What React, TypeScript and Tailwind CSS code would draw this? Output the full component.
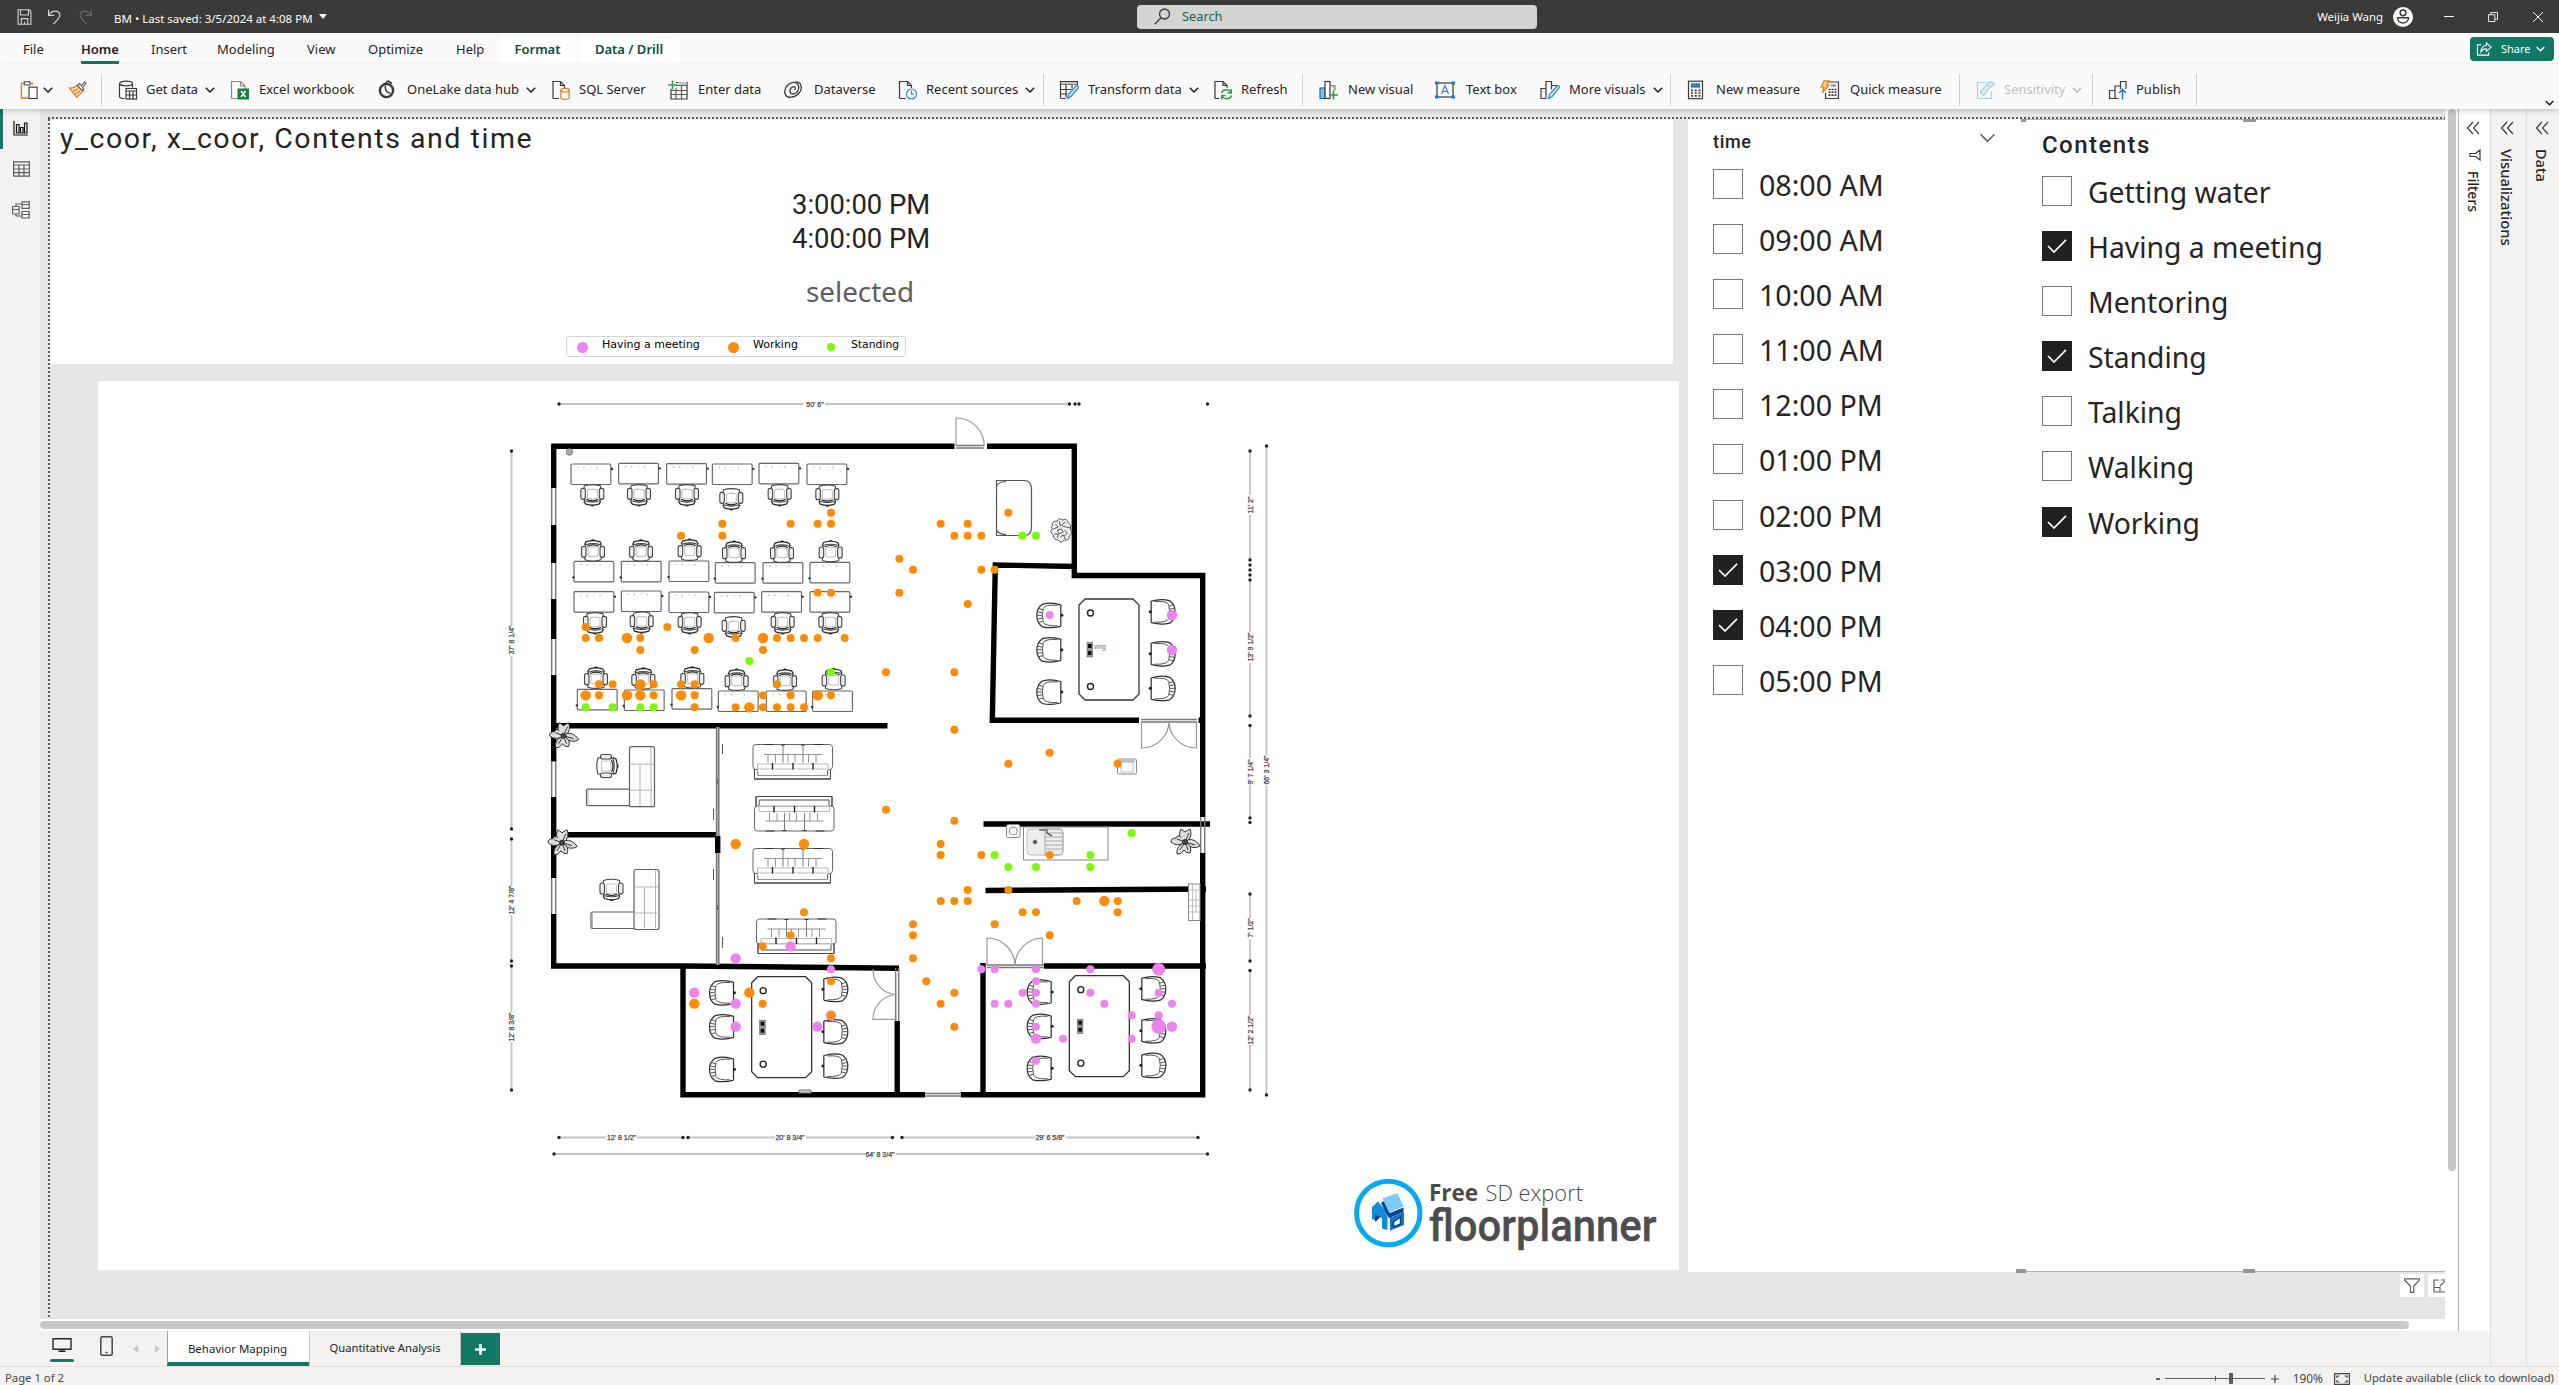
import React from "react";

type Pt = [number, number];

/* ---------- small icons ---------- */

const Svg = ({ children, className = "", box = "0 0 20 20" }: { children: React.ReactNode; className?: string; box?: string }) => (
  <svg viewBox={box} className={"shrink-0 " + className} fill="none" stroke="#3b3a39" strokeWidth="1.2">
    {children}
  </svg>
);

const Chevron = ({ className = "w-[10px] h-[6px]", color = "#252423", weight = 1.5 }: { className?: string; color?: string; weight?: number }) => (
  <svg viewBox="0 0 10 6" className={"shrink-0 " + className} fill="none" stroke={color} strokeWidth={weight}>
    <path d="M.8.7 5 5 9.2.7" />
  </svg>
);

const Collapse = () => (
  <svg viewBox="0 0 14 14" className="h-[14px] w-[14px]" fill="none" stroke="#3b3a39" strokeWidth="1.2">
    <path d="M7 1 1.5 7 7 13M13 1 7.500 7 13 13" />
  </svg>
);

const icons: Record<string, React.ReactNode> = {
  paste: <><path d="M13 4.500V3H1.500v15.500H9" stroke="#e07b16" strokeWidth="1.500" /><rect x="4.500" y="1.200" width="6" height="3.500" fill="#fafafa" stroke="#605e5c" /><rect x="9.500" y="7" width="8.500" height="12" fill="#fff" /></>,
  brush: <><path d="M1.500 8.500 9 18l8-7-3.500-4.500L11.500 8 9.500 5.500C7 8 4.500 8.700 1.500 8.500Z" fill="#fbd9b0" stroke="#e07b16" /><path d="M5 11.500c2 0 4-1 5.500-2.500M7 15c2-.5 4-1.500 5.500-3.500" stroke="#e07b16" /><path d="m10 5.500 2.200-1.700 2 2.400L17.500 2l1.500 1.700-3.500 4 1 1.600-2 1.700Z" fill="#fff" stroke="#605e5c" /></>,
  getdata: <><ellipse cx="8" cy="3.500" rx="6.500" ry="2.300" /><path d="M1.500 3.500v13c0 1.200 2 2 5 2.200M14.500 3.500v4" /><rect x="8" y="8.500" width="10.500" height="10.500" fill="#fff" /><path d="M8 11h10.500M8 15h10.500M11.500 11v8M15 11v8" /></>,
  excel: <><path d="M1.500 18.500v-17h9l4.500 4.500v3M10.500 1.500v4.500H15M1.500 18.500h6" stroke="#8a8886" /><rect x="7.500" y="8.500" width="11.500" height="11" fill="#15803f" stroke="none" /><path d="m11 11 4.500 6M15.500 11 11 17" stroke="#fff" strokeWidth="1.600" /></>,
  onelake: <><circle cx="9.500" cy="10.500" r="6.600" strokeWidth="2.400" /><path d="M8.500 5.500c-1 4 .5 6.500 5 8M8.500 3l2.500-2 4 2.500" strokeWidth="1.500" /></>,
  sql: <><path d="M2 18.500v-17h7.500l4 4v2.500M9.500 1.500v4h4M2 18.500h6" /><ellipse cx="14" cy="10.200" rx="4.200" ry="1.800" stroke="#e07b16" /><path d="M9.800 10.200v7.300c0 2.400 8.400 2.400 8.400 0v-7.300" stroke="#e07b16" /></>,
  enter: <><path d="M8 2.500h11V19H3V9" /><path d="M8 5.500h11M3 10.500h16M3 14.500h16M8 8v11M13.500 5.500V19" stroke="#605e5c" /><path d="M10 1.800h8.500v3H10Z" fill="#c8c6c4" stroke="none" /><path d="M4.500.5v9M0 5h9" stroke="#2f9e44" strokeWidth="1.500" /></>,
  dataverse: <><path d="M8.500 17c-6.500 1.500-8.500-5.500-5-10.500 3-4 8.500-5.500 11-2.500 3 3.500 0 10-4.500 10-4 0-4-5.500-.5-7 2-.8 3.500.8 2.500 3" strokeWidth="1.300" /><path d="M12.500 2c5.500-.5 7.500 5.500 4 10.500-2.500 3-5.500 4.500-8 4.500" strokeWidth="1.300" /></>,
  recent: <><path d="M1.500 18.500v-17h8l4 4v2.500M9.500 1.500v4h4M1.500 18.500h6" /><circle cx="13.500" cy="14" r="5" stroke="#2b88d8" fill="#fff" /><path d="M13.500 10.700v3.500h2.500" stroke="#2b88d8" /></>,
  transform: <><path d="M1.500 18.500v-17h17v3H1.500M1.500 9.500h11M1.500 14h7M7 4.500v13M13 4.500v4M1.500 18.500h5" /><path d="M2 2h16v2.500H2Z" fill="#c8c6c4" stroke="none" /><path d="m8.500 18.500 1-4 7.500-8.500c1.500-1 3 .5 2.200 2L12 16.500Z" fill="#d4eafb" stroke="#2b88d8" /></>,
  refresh: <><path d="M2 18.500v-17h8l4 4v2.500M10 1.500v4h4M2 18.500h4" /><path d="M8.500 13c1-4 7.500-4.500 9.500-.5M18.300 9v4h-3.800M18.500 15.500c-1 4-7.500 4.500-9.500.5M8.700 19.500v-4h3.800" stroke="#2f9e44" strokeWidth="1.400" /></>,
  newvisual: <><rect x="1" y="8" width="5" height="10.500" fill="#83bef0" stroke="#1f6fb5" /><rect x="6" y="1.500" width="5" height="17" fill="#fff" /><path d="M11 5.500h5v5" stroke="#8a8886" fill="#c8c6c4" /><path d="M14.500 10.500v9M10 15h9" stroke="#2f9e44" strokeWidth="1.600" /></>,
  textbox: <><rect x="2" y="3" width="16" height="14" /><path d="M6.500 14 10 5.500 13.500 14M7.700 11.500h4.600" stroke="#2b88d8" /><path d="M0 1.500h3.500v3H0ZM16.500 1.500H20v3h-3.500ZM0 15.500h3.500v3H0ZM16.500 15.500H20v3h-3.500Z" fill="#0f78d4" stroke="none" /></>,
  morevisuals: <><path d="M6 8.500H1v10h5M6 18.500v-17h5.500v8M11.500 5.500H17v2" /><path d="m8.500 18.500 1-4L17 6c1.500-1 3 .5 2.200 2L12 16.500Z" fill="#d4eafb" stroke="#2b88d8" /></>,
  newmeasure: <><rect x="2.500" y="1.200" width="14" height="17.500" /><rect x="5.500" y="4" width="8" height="3" fill="#2b88d8" stroke="#1f6fb5" /><path d="M5 10.300h9.500M5 13h9.500M5 15.800h9.500" strokeDasharray="2 1.700" strokeWidth="1.700" /></>,
  quickmeasure: <><path d="M8 2h10.500v16.500H5.500V13" /><path d="M8.500 9.500h8M8.500 12.300h8M8.500 15.100h8" strokeDasharray="2 1" strokeWidth="1.600" /><path d="M11 5.500h5" stroke="#8a8886" strokeWidth="2" /><path d="M4 .8h5L6.500 5H9L2.500 12.500 4 7H1.200Z" fill="#fbd091" stroke="#e07b16" /></>,
  sensitivity: <><path d="M10 2.500H1.500v16h14V11" stroke="#a9d0ee" /><path d="m4 12.500 6.500-8 3.500 3-6.500 8ZM10.500 4.500l2.500-3 1.500 1.300 1-1.300 3 2.600-4.500 3.400" fill="#d9ebf8" stroke="#a9d0ee" /></>,
  publish: <><path d="M8 18.500H1.500v-8H7M7 18.500V6h5.500M12.500 9V1.500H18V9M8 18.500h2.500" /><path d="M14.500 19.500v-10M11 13l3.500-3.700L18 13" stroke="#1f78c1" strokeWidth="1.500" /></>,
};

const Tool = ({ icon, label, w, pad = "ml-2", chev, dim }: { icon: string; label: string; w: string; pad?: string; chev?: boolean; dim?: boolean }) => (
  <div className={"flex h-full shrink-0 items-center " + w}>
    <Svg className="h-[20px] w-[20px]">{icons[icon]}</Svg>
    <span className={"whitespace-nowrap text-[13px] " + pad + (dim ? " text-[#c1bfbd]" : " text-[#252423]")}>{label}</span>
    {chev && <Chevron className="ml-[7px] h-[6px] w-[10px]" color={dim ? "#c1bfbd" : "#252423"} />}
  </div>
);

const Rule = ({ m }: { m: string }) => <div className={"h-8 w-px shrink-0 bg-[#d2d0ce] " + m} />;

/* ---------- header ---------- */

function TitleBar() {
  return (
    <div className="flex h-[33px] items-center bg-[#3b3a38] text-white">
      <div className="flex w-[114px] items-center pl-4">
        <Svg className="h-4 w-[17px]"><path d="M2 1h14l2 2v16H2ZM5 1v6.500h10V1M6 19v-7h8v7M10 16v3" stroke="#d6d4d2" strokeWidth="1.400" /></Svg>
        <Svg className="ml-[14px] h-4 w-[16px]"><path d="M2 1v7h7M2.500 7.500C6 1 15 1 16 7c.7 4-4 7-8 12" stroke="#d6d4d2" strokeWidth="1.500" /></Svg>
        <Svg className="ml-[14px] h-4 w-[16px]"><path d="M18 1v7h-7M17.500 7.500C14 1 5 1 4 7c-.7 4 4 7 8 12" stroke="#6b6a68" strokeWidth="1.500" /></Svg>
      </div>
      <span className="w-[199px] whitespace-nowrap pt-[5px] text-[11.500px]">BM • Last saved: 3/5/2024 at 4:08 PM</span>
      <svg viewBox="0 0 8 5" className="ml-[6px] h-[5px] w-[8px]" fill="#fff"><path d="M0 0h8L4 5Z" /></svg>
      <div className="ml-[810px] flex h-6 w-[400px] items-center rounded-sm bg-[#d4d4d2] pl-[17px]">
        <svg viewBox="0 0 17 17" className="h-[17px] w-[17px]" fill="none" stroke="#3b3a38" strokeWidth="1.300"><circle cx="10.500" cy="6" r="5" /><path d="M7 9.800.7 16.300" /></svg>
        <span className="ml-[11px] text-[12.800px] text-[#1c6150]">Search</span>
      </div>
      <span className="ml-auto whitespace-nowrap text-[11.400px]">Weijia Wang</span>
      <svg viewBox="0 0 20 20" className="ml-[10px] mr-[31px] h-5 w-5"><circle cx="10" cy="10" r="10" fill="#fff" /><circle cx="10" cy="5.800" r="2.900" fill="none" stroke="#3b3a38" strokeWidth="1.500" /><path d="M4.500 10.800h11c0 7-11 7-11 0Z" fill="none" stroke="#3b3a38" strokeWidth="1.500" /></svg>
      <div className="h-px w-[10px] bg-white" />
      <svg viewBox="0 0 11 11" className="ml-[34px] h-[10px] w-[10px]" fill="none" stroke="#fff"><path d="M.5 3h7v7.500h-7ZM3 3V.5h7.500V8H7.500" /></svg>
      <svg viewBox="0 0 10 10" className="ml-[35px] mr-[16px] h-[10px] w-[10px]" fill="none" stroke="#fff"><path d="m0 0 10 10M10 0 0 10" /></svg>
    </div>
  );
}

function MenuBar() {
  const item = "flex shrink-0 items-center whitespace-nowrap pt-[2px] text-[13px] text-[#252423] ";
  return (
    <div className="flex h-[31px] bg-[#fafafa]">
      <div className={item + "w-[81px] pl-[23px]"}>File</div>
      <div className="flex w-[70px] flex-col">
        <div className="flex flex-1 items-center whitespace-nowrap pt-[5px] text-[13px] font-semibold text-[#252423]">Home</div>
        <div className="h-[3px] w-[38px] bg-[#117865]" />
      </div>
      <div className={item + "w-[66px]"}>Insert</div>
      <div className={item + "w-[90px]"}>Modeling</div>
      <div className={item + "w-[61px]"}>View</div>
      <div className={item + "w-[88px]"}>Optimize</div>
      <div className={item + "w-[44px]"}>Help</div>
      <div className="flex w-[75px] items-center justify-center bg-white pt-[2px] text-[13px] font-semibold text-[#0b4a3f]">Format</div>
      <div className="ml-1 flex w-[100px] items-center justify-center whitespace-nowrap bg-white pt-[2px] text-[13px] font-semibold text-[#0b4a3f]">Data / Drill</div>
      <div className="ml-auto mr-[5px] mt-1 flex h-6 w-[84px] items-center rounded-[4px] bg-[#117865] pl-[6px] text-white">
        <svg viewBox="0 0 17 15" className="h-[14px] w-[17px]" fill="none" stroke="#fff" strokeWidth="1.200"><path d="M5 3H1v11h12v-3M10.500 1l5 4.500-5 4.500V7.500C7.500 7 6 8.500 4.500 10.500 5 6.500 7 4 10.500 3.500Z" /></svg>
        <span className="ml-[8px] pt-px text-[11px]">Share</span>
        <Chevron className="ml-[5px] h-[6px] w-[9px]" color="#fff" />
      </div>
    </div>
  );
}

function Toolbar() {
  return (
    <div className="relative z-10 flex h-[45px] items-center bg-[#fafafa] pt-[6px] shadow-[0_2px_5px_rgba(0,0,0,0.18)]">
      <div className="ml-[20px] flex w-[48px] items-center">
        <Svg className="h-[20px] w-[19px]">{icons.paste}</Svg>
        <Chevron className="ml-1 h-[6px] w-[10px]" />
      </div>
      <Svg className="h-[19px] w-[19px]">{icons.brush}</Svg>
      <Rule m="ml-[14px] mr-4" />
      <Tool icon="getdata" label="Get data" w="w-[112px]" chev />
      <Tool icon="excel" label="Excel workbook" w="w-[147px]" pad="ml-[9px]" />
      <Tool icon="onelake" label="OneLake data hub" w="w-[174px]" pad="ml-[10px]" chev />
      <Tool icon="sql" label="SQL Server" w="w-[117px]" />
      <Tool icon="enter" label="Enter data" w="w-[115px]" pad="ml-[10px]" />
      <Tool icon="dataverse" label="Dataverse" w="w-[115px]" pad="ml-[11px]" />
      <Tool icon="recent" label="Recent sources" w="w-[145px]" chev />
      <Rule m="mr-[15px]" />
      <Tool icon="transform" label="Transform data" w="w-[154px]" pad="ml-[9px]" chev />
      <Tool icon="refresh" label="Refresh" w="w-[89px]" />
      <Rule m="mr-4" />
      <Tool icon="newvisual" label="New visual" w="w-[116px]" pad="ml-[9px]" />
      <Tool icon="textbox" label="Text box" w="w-[105px]" pad="ml-[11px]" />
      <Tool icon="morevisuals" label="More visuals" w="w-[130px]" pad="ml-[9px]" chev />
      <Rule m="mr-[15px]" />
      <Tool icon="newmeasure" label="New measure" w="w-[134px]" pad="ml-[10px]" />
      <Tool icon="quickmeasure" label="Quick measure" w="w-[139px]" pad="ml-[10px]" />
      <Rule m="mr-4" />
      <Tool icon="sensitivity" label="Sensitivity" w="w-[116px]" chev dim />
      <Rule m="mr-[15px]" />
      <Tool icon="publish" label="Publish" w="w-[88px]" />
      <Rule m="" />
      <Chevron className="ml-auto mr-[5px] mt-[27px] h-[6px] w-[9px]" color="#111" />
    </div>
  );
}

/* ---------- floor plan ---------- */

// Points are given in thirds of a unit relative to one of four plan quadrants.
const at = (ox: number, oy: number, pts: Pt[]): Pt[] => pts.map(([x, y]) => [ox + x / 3, oy + y / 3]);

const ORANGE = "#ff8c00";
const GREEN = "#7cfc00";
const VIOLET = "#ee82ee";

const dots: { fill: string; r: number; pts: Pt[] }[] = [
  { fill: VIOLET, r: 5.2, pts: [...at(860, 380, [[936, 705], [936, 810]]), ...at(500, 710, [[872, 709], [707, 745], [583, 848], [707, 881], [707, 950], [952, 950], [993, 916]]), ...at(880, 710, [[468, 986], [876, 950]])] },
  { fill: VIOLET, r: 6.4, pts: at(880, 710, [[836, 778]]) },
  { fill: VIOLET, r: 7.3, pts: at(880, 710, [[836, 950]]) },
  { fill: VIOLET, r: 4, pts: [...at(860, 380, [[569, 705]]), ...at(500, 710, [[993, 778]]), ...at(880, 710, [[304, 778], [344, 778], [468, 778], [631, 778], [468, 814], [428, 848], [468, 848], [631, 848], [836, 848], [344, 881], [385, 881], [468, 881], [673, 881], [876, 881], [755, 916], [836, 916], [468, 950], [549, 986], [755, 986], [468, 1052]])] },
  { fill: ORANGE, r: 5.2, pts: [...at(500, 380, [[381, 774], [626, 774], [789, 774], [421, 913], [257, 946], [381, 946], [421, 946], [543, 946], [953, 946], [748, 982]]), ...at(500, 710, [[707, 402], [912, 402], [748, 848], [583, 881]]), ...at(880, 710, [[673, 573]])] },
  {
    fill: ORANGE, r: 4, pts: [
      ...at(500, 380, [[993, 398], [667, 431], [872, 431], [953, 431], [993, 431], [543, 467], [667, 467], [1198, 536], [1239, 569], [1198, 638], [953, 638], [993, 638], [257, 741], [502, 741], [257, 774], [297, 774], [421, 774], [707, 774], [831, 774], [872, 774], [912, 774], [953, 774], [1034, 774], [421, 810], [584, 810], [789, 810], [1158, 877], [297, 913], [338, 913], [461, 913], [543, 913], [584, 913], [831, 913], [297, 946], [461, 946], [584, 946], [789, 946], [872, 946], [993, 946], [584, 982], [707, 982], [789, 982], [831, 982], [872, 982], [912, 982]]),
      ...at(860, 380, [[445, 398], [242, 431], [323, 431], [283, 467], [323, 467], [364, 467], [364, 569], [404, 569], [323, 672], [283, 877]]),
      ...at(500, 710, [[1158, 299], [912, 607], [872, 676], [788, 709], [993, 745], [1239, 643], [1239, 676], [1239, 745], [993, 814], [788, 881], [993, 916]]),
      ...at(880, 710, [[223, 59], [509, 128], [385, 161], [713, 161], [223, 332], [182, 402], [182, 435], [304, 435], [509, 435], [263, 540], [385, 540], [182, 573], [223, 573], [263, 573], [590, 573], [713, 573], [428, 607], [468, 607], [713, 607], [344, 643], [509, 676], [139, 814], [223, 848], [182, 881], [223, 950]]),
    ],
  },
  { fill: GREEN, r: 4, pts: [...at(500, 380, [[748, 843], [993, 877], [257, 982], [338, 982], [421, 982], [461, 982]]), ...at(860, 380, [[487, 467], [528, 467]]), ...at(880, 710, [[755, 369], [344, 435], [631, 435], [385, 471], [468, 471], [631, 471]])] },
];

const desks: Pt[] = at(500, 380, [
  [213, 252], [356, 250], [500, 251], [637, 252], [777, 250], [921, 252],
  [222, 544], [364, 544], [507, 543], [646, 548], [789, 548], [930, 547],
  [222, 635], [364, 633], [507, 636], [643, 637], [785, 635], [930, 635],
  [232, 928], [373, 930], [516, 926], [655, 933], [799, 933], [938, 933],
]);
const chairsDown: Pt[] = at(500, 380, [[277, 346], [417, 346], [561, 346], [694, 358], [839, 346], [982, 347], [285, 730], [425, 728], [569, 730], [701, 742], [848, 730], [991, 730]]);
const chairsUp: Pt[] = at(500, 380, [[279, 511], [423, 511], [569, 509], [702, 515], [846, 515], [992, 513], [288, 893], [430, 895], [577, 892], [710, 899], [855, 899], [1001, 897]]);
const seatsLeft: Pt[] = [...at(860, 380, [[568, 706], [568, 809], [568, 936]]), ...at(500, 710, [[666, 848], [666, 950], [666, 1078]]), ...at(880, 710, [[479, 846], [479, 949], [479, 1075]])];
const seatsRight: Pt[] = [...at(860, 380, [[908, 695], [908, 821], [908, 925]]), ...at(500, 710, [[1006, 838], [1006, 965], [1006, 1068]]), ...at(880, 710, [[820, 836], [820, 962], [820, 1066]])];
const tables: Pt[] = [...at(860, 380, [[657, 657]]), ...at(500, 710, [[755, 800]]), ...at(880, 710, [[568, 797]])];
const sofas: [number, number, boolean][] = [[753, 744.5, false], [754.5, 796, true], [753, 848.5, false], [756.5, 919, false]];
const plants: Pt[] = [[563.5, 735.7], [562, 842.7], [1185, 842]];

const walls = [
  "M551.5 446.300H954.500M987 446.300H1074.300V575.500H1202.700V817M1202.700 853V1094.700H961M925 1094.700H683V966",
  "M553.700 444V488M553.700 525V563M553.700 599V639M553.700 675V761.500M553.700 797V878M553.700 914V966H683L899 968.200",
  "M1076 566.500 995.300 565 992.300 720.300H1139M1198.500 720.300H1203",
  "M553 725.700H887.500M553 834.700H718M717.700 836V853M897.200 1021V1094",
  "M983 963V1094M1044 966H1206M983.500 824H1210M985.500 890.500 1206 889",
];

function OfficeChair() {
  return (
    <g>
      <path d="M-8-8.500Q0-11 8-8.500L8.500-5Q9 2 7.500 6.500Q0 9-7.500 6.500Q-9 2-8.500-5Z" fill="#fff" />
      <rect x="-11.500" y="-6" width="4.500" height="11" rx="2" fill="#eee" />
      <rect x="7" y="-6" width="4.500" height="11" rx="2" fill="#eee" />
      <path d="M-8.500 6.500-7 9.500Q0 12 7 9.500L8.500 6.500M-2 10.500Q0 12.500 2 10.500M-6 5Q0 8 6 5" stroke="#222" strokeWidth="1.200" />
      <rect x="-5" y="-5" width="10" height="9.500" rx="2" stroke="#c4c4c4" />
    </g>
  );
}

function Seat() {
  return (
    <g>
      <path d="M11-10.500Q2-13.500-7-11Q-12.500-7-12.500 0Q-12.500 8-7 11.500Q2 13.500 11 11Q12 10.500 11.500 9V-9Q12-10.500 11-10.500Z" fill="#fff" stroke="#2c2c2c" strokeWidth="1.200" />
      <path d="M8-10Q-4-11-6-7Q-8 0-6 7Q-4 11 8 10.500M-12-3.500-7-2.500M-12.300 0H-7.500M-12 3.500-7 3M-10.500 7-6.500 6M-10.500-7-6.500-5.500" stroke="#555" strokeWidth="1" />
      <circle cx="12.500" cy="0" r="1.500" fill="#222" stroke="none" />
    </g>
  );
}

function Table({ mark }: { mark: boolean }) {
  return (
    <g>
      <path d="M6 0H54L60 6V95L54 101H6L0 95V6Z" fill="#fff" stroke="#333" strokeWidth="1.300" />
      <circle cx="11.500" cy="14" r="3" stroke="#222" strokeWidth="1.400" />
      <circle cx="11.500" cy="87.500" r="3" stroke="#222" strokeWidth="1.400" />
      <rect x="8" y="43.500" width="5.600" height="14.500" fill="#999" stroke="#666" strokeWidth=".6" />
      <path d="M9 45h3.600v4H9ZM9 52h3.600v4H9Z" fill="#111" stroke="none" />
      {mark && <text x="15" y="49.500" fontSize="6.500" fontFamily="Liberation Sans" fill="#666" stroke="none">ving</text>}
    </g>
  );
}

function Sofa() {
  return (
    <g strokeWidth="1">
      <path d="M1.500 24.500V34.500H77.500V24.500M5 19Q4 26 5 31H74.500V19" stroke="#444" fill="#fff" />
      <rect x="0" y="0" width="79.500" height="25" rx="3" fill="#fff" stroke="#666" />
      <path d="M4.500 24.700H75" stroke="#fff" strokeWidth="1.500" />
      <path d="M1.500 24.500V34.500H77.500V24.500" stroke="#444" />
      <path d="M30 0V18M50 0V18" stroke="#777" />
      <path d="M11 10H69M15 10V18M22.500 10V18M35 10V18M42 10V18M55.500 10V18M63 10V18" stroke="#888" strokeWidth=".9" />
      <path d="M4.500 19.500H75V31H4.500ZM5 24.500H74" stroke="#aaa" strokeWidth=".8" />
      <path d="M19.500 18.500V25M40 18.500V25M60 18.500V25" stroke="#222" strokeWidth="1.400" />
      <path d="M11 0h9M28 .5h4M48 .5h4M61 0h9" stroke="#333" strokeWidth="1.200" />
    </g>
  );
}

function Plant() {
  return (
    <g fill="#ddd" stroke="#333" strokeWidth="1">
      <path d="M-2 0Q-8-6-4-13L0-10 5-13Q8-6 2 0Z" />
      <path d="M0 0Q6-6 14 2L15 4Q8 8 1 2Z" />
      <path d="M0 0Q8 4 5 11Q0 11-1 8Q-4 13-8 12Q-9 5-2 1Z" />
      <path d="M-1 1Q-9 5-14 0Q-14-4-9-4Q-8-7-5-6Z" />
      <path d="M-8-3 0 0 4-9M0 0 10 3M0 0-5 8M0 0 3 8" />
      <circle r="2.500" fill="#444" />
    </g>
  );
}

const LDesk = ({ x, y }: { x: number; y: number }) => (
  <g transform={`translate(${x} ${y})`} stroke="#5f5f5f" strokeWidth="1.200" fill="#fff">
    <rect x="0" y="42.500" width="46" height="16.500" rx="1.500" />
    <rect x="43" y="0" width="25" height="60" rx="2" />
    <path d="M43 17.500H68M64.500 1V59M1.500 43V59M43 43.500H66M53.500 18V59" stroke="#aaa" strokeWidth=".9" />
  </g>
);

const dim: [number, number, string, boolean][] = [
  [815, 404, `50' 6"`, false], [621.5, 1137.5, `12' 8 1/2"`, false], [790, 1137.5, `20' 8 3/4"`, false], [1050, 1137.5, `29' 6 5/8"`, false], [880, 1154, `64' 8 3/4"`, false],
  [511.500, 640, `37' 8 1/4"`, true], [511.500, 900, `12' 4 7/8"`, true], [511.500, 1027, `12' 8 3/8"`, true],
  [1250, 505, `11' 2"`, true], [1250, 647, `13' 9 1/2"`, true], [1250, 772, `9' 7 1/4"`, true], [1250, 928, `7' 1/2"`, true], [1250, 1030, `12' 2 1/2"`, true], [1266.500, 770, `66' 3 1/4"`, true],
];
const dimDots: Pt[] = [
  [559, 404], [1069.500, 404], [1075, 404], [1079, 404], [1207.500, 404],
  [511.500, 451], [511.500, 829], [511.500, 839], [511.500, 961], [511.500, 966], [511.500, 1090],
  [559, 1137.500], [683, 1137.500], [688, 1137.500], [892.500, 1137.500], [902, 1137.500], [1198, 1137.500], [554, 1154], [1207.500, 1154],
  [1250, 451], [1250, 560], [1250, 565], [1250, 570], [1250, 575], [1250, 580], [1250, 716], [1250, 725.500], [1250, 818], [1250, 822.500], [1250, 894], [1250, 961], [1250, 970.500], [1250, 1090], [1266.500, 446], [1266.500, 1095],
];

function FloorPlan() {
  return (
    <svg viewBox="98 381 1581 889" className="h-[889px] w-[1581px]" fill="none">
      <g stroke="#c4c4c4" strokeWidth="1.800">
        <path d="M559 404H803M825 404H1069M511.500 451V626M511.500 656V829M511.500 839V886M511.500 915V961M511.500 966V1012M511.500 1042V1090" />
        <path d="M559 1137.500H606M637 1137.500H683M688 1137.500H775M806 1137.500H892M902 1137.500H1035M1066 1137.500H1198M554 1154H865M896 1154H1207" />
        <path d="M1250 451V495M1250 515V560M1250 580V632M1250 663V716M1250 725V758M1250 785V818M1250 894V918M1250 939V961M1250 970V1015M1250 1045V1090M1266.500 446V755M1266.500 786V1095" />
      </g>
      <g fill="#222">{dimDots.map(([x, y], i) => <circle key={i} cx={x} cy={y} r="1.700" />)}</g>
      <g fontFamily="Liberation Sans" fontSize="7" fill="#444" stroke="#444" strokeWidth=".25" textAnchor="middle">
        {dim.map(([x, y, t, v], i) => <text key={i} transform={`translate(${x} ${y})` + (v ? " rotate(-90)" : "")} y="2.500">{t}</text>)}
      </g>

      <g stroke="#000" strokeWidth="5.400">{walls.map((d, i) => <path key={i} d={d} />)}</g>
      <g stroke="#777" strokeWidth="1.400">
        <path d="M551.700 488v37M555.700 488v37M551.700 563v36M555.700 563v36M551.700 639v36M555.700 639v36M551.700 761v36M555.700 761v36M551.700 878v36M555.700 878v36" />
        <path d="M1200.700 817v36M1204.700 817v36M925 1093.500h36M925 1096h36M956 445.500h28M956 448h28M1141 719.500h56M1141 722h56M987 965h57M987 967.500h57" />
        <path d="M895.700 968v53M898.700 968v53" />
      </g>
      <path d="M717.700 727V836M717.700 853V965" stroke="#7a7a7a" strokeWidth="3.800" />
      <path d="M717.700 727V836M717.700 853V965" stroke="#b5b5b5" strokeWidth="1" />
      <path d="M722.500 744v10M713.500 809v11M713.500 869v11M722.500 937v11M717.700 779v5M717.700 905v5" stroke="#555" />
      <g stroke="#999" strokeWidth="1.200">
        <path d="M956 446V418A28 28 0 0 1 984.300 446" />
        <path d="M1141.500 721V748A27.500 27 0 0 0 1169 721A27.500 27 0 0 0 1196.500 748V721" />
        <path d="M987 966V938A28 28 0 0 1 1015 966A28 28 0 0 1 1042.500 938V966" />
        <path d="M873 969A24.500 25 0 0 0 897 994.500A24.500 25 0 0 0 873 1019.300H897" />
      </g>
      <circle cx="569.500" cy="452" r="3.300" fill="#aaa" stroke="#888" />
      <path d="M799 1090h12v3h-12Z" stroke="#777" fill="#ccc" />

      <g stroke="#666" strokeWidth="1.150">
        {desks.map(([x, y], i) => (
          <g key={i} transform={`translate(${x} ${y})`}>
            <rect width="39.800" height="20.500" rx="1" fill="#fff" />
            <path d="M7 2.500v1.500M13 2.500v2M20 2.500v1M26 2.500v2" stroke="#bbb" />
            <circle cx={i % 12 < 6 && i < 18 ? 41 : -0.5} cy={i % 12 < 6 && i < 18 ? 5 : 16} r="1.200" fill="#333" stroke="none" />
          </g>
        ))}
      </g>
      <g stroke="#444" strokeWidth="1.100">
        {chairsDown.map(([x, y], i) => <g key={i} transform={`translate(${x} ${y - 1})`}><OfficeChair /></g>)}
        {chairsUp.map(([x, y], i) => <g key={i} transform={`translate(${x} ${y + 1}) scale(1 -1)`}><OfficeChair /></g>)}
        <g transform="translate(606.500 766) rotate(-90)"><OfficeChair /></g>
        <g transform="translate(611.500 889)"><OfficeChair /></g>
      </g>
      {tables.map(([x, y], i) => <g key={i} transform={`translate(${x} ${y})`}><Table mark={i === 0} /></g>)}
      {seatsLeft.map(([x, y], i) => <g key={i} transform={`translate(${x} ${y})`}><Seat /></g>)}
      {seatsRight.map(([x, y], i) => <g key={i} transform={`translate(${x} ${y}) scale(-1 1)`}><Seat /></g>)}
      {sofas.map(([x, y, flip], i) => <g key={i} transform={`translate(${x} ${flip ? y + 35 : y})` + (flip ? " scale(1 -1)" : "")}><Sofa /></g>)}
      <LDesk x={586.500} y={746.700} />
      <LDesk x={591} y={869.500} />
      {plants.map(([x, y], i) => <g key={i} transform={`translate(${x} ${y})`}><Plant /></g>)}

      <path d="M996.500 480.500H1024Q1031.500 480.500 1031.500 489V527Q1031.500 535.500 1024 535.500H996.500ZM996.500 486Q998 482 1006 481.500M996.500 530Q998 534 1006 534.500" stroke="#555" strokeWidth="1.200" />
      <g transform="translate(1061.300 530)" stroke="#444" strokeWidth=".9" fill="#eee">
        <path d="M-9-4Q-10-9-4-9Q-2-13 1-10Q6-12 7-7Q11-5 9-1Q12 3 8 6Q8 11 3 10Q0 14-3 10Q-8 10-8 5Q-12 2-9-1Q-11-3-9-4Z" />
        <path d="M-6-6-3-3-8-1M-2-9-1-4 4-8M1-4 5-3 9-2M-4 0 0-1 2 2-2 4ZM3 0 6 3 3 6M-7 4-3 4-4 8M-1 7 2 5 4 9" />
      </g>
      <g stroke="#888">
        <rect x="1023.500" y="827" width="84.500" height="33" fill="#fff" />
        <rect x="1027" y="829" width="36" height="26" rx="4" fill="#eee" stroke="#bbb" />
        <path d="M1045 829h14q4 0 4 5v16q0 5-4 5h-14ZM1045 833h18M1045 837h18M1045 841h18M1045 845h18M1045 849h18" stroke="#aaa" />
        <path d="M1039 830h8v3l5 3" stroke="#666" strokeWidth="1.500" />
        <circle cx="1035" cy="842" r="2" fill="#444" />
        <rect x="1006.500" y="824.500" width="13.500" height="13" rx="2" fill="#fff" />
        <circle cx="1013.300" cy="831" r="4" />
        <rect x="1117.500" y="759" width="19" height="15" rx="1.500" fill="#fff" /><rect x="1121" y="762" width="12" height="10" stroke="#bbb" /><path d="M1119 761h16" />
        <rect x="1188.500" y="884" width="11.500" height="36.500" fill="#fff" /><path d="M1189 890h11M1189 900h11M1189 906h11M1189 912h11M1192.500 884v36M1196 890v22" stroke="#bbb" />
      </g>

      {dots.map((g, i) => <g key={i} fill={g.fill}>{g.pts.map(([x, y], j) => <circle key={j} cx={x} cy={y} r={g.r} />)}</g>)}

      <circle cx="1388.300" cy="1213" r="31.700" stroke="#03a9f4" strokeWidth="5" fill="#fff" />
      <path d="M1372 1207 1378 1201.500 1387.500 1213V1230L1382 1228.500V1218L1377 1216V1221L1372 1219Z" fill="#0b8fdc" />
      <path d="M1381 1203 1384 1201 1390 1213 1403.500 1207.500V1212L1389 1218Z" fill="#0d3f95" />
      <path d="M1382.500 1198.500 1397.500 1193 1403.500 1206.500 1389 1212.500Z" fill="#7accf8" />
      <path d="M1390 1217.500 1404 1212V1225L1390 1230.500Z" fill="#0b76cc" />
      <path d="m1393.500 1222 7-5v7l-7 3Z" fill="#fff" stroke="#0d3f95" strokeWidth="1.500" />
      <path d="M1375 1214.500 1380.500 1217 1375 1222Z" fill="#0d3f95" />
      <text x="1429" y="1200.500" fontFamily="Open Sans" fontWeight="700" fontSize="22.500" fill="#4a4a4a">Free</text>
      <text x="1485.500" y="1200.500" fontFamily="Open Sans" fontWeight="300" fontSize="22.500" fill="#4a4a4a" textLength="97.500" lengthAdjust="spacingAndGlyphs">SD export</text>
      <text x="1429" y="1240.500" fontFamily="Roboto" fontWeight="500" fontSize="45" fill="#4d4d4d" stroke="#4d4d4d" strokeWidth=".4" textLength="227.500" lengthAdjust="spacingAndGlyphs">floorplanner</text>
    </svg>
  );
}

/* ---------- report canvas ---------- */

const CheckRow = ({ label, on, size }: { label: string; on: boolean; size: string }) => (
  <div className="flex h-[55.100px] items-start">
    {on ? (
      <div className="flex h-[30px] w-[30px] shrink-0 items-center justify-center bg-[#212121]">
        <svg viewBox="0 0 20 14" className="h-[14px] w-[20px]" fill="none" stroke="#fff" strokeWidth="1.700"><path d="m1 7 6 6L19 .8" /></svg>
      </div>
    ) : (
      <div className="h-[30px] w-[30px] shrink-0 border-[1.500px] border-[#7a7876] bg-white" />
    )}
    <span className={"ml-[16px] whitespace-nowrap leading-[32px] text-[#252423] " + size}>{label}</span>
  </div>
);

const times: [string, boolean][] = [["08:00 AM", false], ["09:00 AM", false], ["10:00 AM", false], ["11:00 AM", false], ["12:00 PM", false], ["01:00 PM", false], ["02:00 PM", false], ["03:00 PM", true], ["04:00 PM", true], ["05:00 PM", false]];
const contents: [string, boolean][] = [["Getting water", false], ["Having a meeting", true], ["Mentoring", false], ["Standing", true], ["Talking", false], ["Walking", false], ["Working", true]];

function SummaryCard() {
  return (
    <div className="flex h-[245px] w-[1623px] flex-col bg-white">
      <div className="ml-[10px] mt-[2px] h-[36px] whitespace-nowrap font-['Roboto'] text-[28.500px] leading-[36px] tracking-[1.550px] text-[#252423]">y_coor, x_coor, Contents and time</div>
      <div className="ml-[742px] mt-[31px] w-[142px] whitespace-nowrap font-['Roboto'] text-[27.400px] leading-[34px] text-[#252423]">
        <div>3:00:00 PM</div>
        <div>4:00:00 PM</div>
      </div>
      <div className="ml-[756px] mt-[17px] h-[36px] text-[27.800px] leading-[36px] text-[#605e5c]">selected</div>
      <div className="ml-[516px] mt-[27px] flex h-[21px] w-[340px] items-center rounded-[3px] border border-[#d4d4d4] font-['DejaVu_Sans'] text-[11px] text-black">
        <span className="ml-[10px] mt-px h-[11px] w-[11px] rounded-full bg-[#ee82ee]" />
        <span className="ml-[14px] w-[98px] whitespace-nowrap pb-[3px]">Having a meeting</span>
        <span className="ml-[28px] mt-px h-[11px] w-[11px] rounded-full bg-[#ff8c00]" />
        <span className="ml-[14px] w-[44px] whitespace-nowrap pb-[3px]">Working</span>
        <span className="ml-[30px] mt-px h-[8px] w-[8px] rounded-full bg-[#7cfc00]" />
        <span className="ml-[16px] whitespace-nowrap pb-[3px] text-[10.800px]">Standing</span>
      </div>
    </div>
  );
}

function Slicers() {
  return (
    <div className="relative flex h-[1153px] shrink-0 bg-white">
      <div className="w-[329px] pl-[25px]">
        <div className="flex h-[50px] items-start justify-between pr-[21px] pt-[9px] font-['Roboto'] text-[18px] font-medium leading-[28px] tracking-[0.700px] text-[#252423]">
          time
          <Chevron className="mt-[5px] h-[10px] w-[17px]" color="#605e5c" weight={0.9} />
        </div>
        {times.map(([l, on]) => <CheckRow key={l} label={l} on={on} size="text-[28.600px]" />)}
      </div>
      <div className="flex-1 pl-[25px]">
        <div className="h-[57px] pt-[11px] font-['Roboto'] text-[24px] font-medium leading-[30px] tracking-[1.450px] text-[#252423]">Contents</div>
        {contents.map(([l, on]) => <CheckRow key={l} label={l} on={on} size="text-[28.300px]" />)}
      </div>
      <div className="absolute left-[334px] right-0 top-0 h-px bg-[#b5b3b1]" />
      <div className="absolute left-[333px] top-0 h-[3px] w-[5px] bg-[#979593]" />
      <div className="absolute left-[555px] top-0 h-[3px] w-[13px] bg-[#979593]" />
      <div className="absolute bottom-0 left-[334px] right-0 h-px bg-[#b5b3b1]" />
      <div className="absolute -bottom-px left-[328px] h-[4px] w-[10px] bg-[#979593]" />
      <div className="absolute -bottom-px left-[555px] h-[4px] w-[12px] bg-[#979593]" />
    </div>
  );
}

function Canvas() {
  return (
    <div className="flex h-[1222px] w-[2418px] flex-col">
      <div className="flex h-[1210px]">
        <div className="flex h-full w-[2405px] flex-col overflow-hidden bg-[#e6e6e6] pl-2 pt-2">
          <div className="h-[2px] shrink-0 bg-[repeating-linear-gradient(90deg,#5a5a5a_0_2px,#e6e6e6_2px_4px)]" />
          <div className="flex flex-1">
            <div className="w-[2px] shrink-0 bg-[repeating-linear-gradient(180deg,#5a5a5a_0_2px,#f2f2f2_2px_4px)]" />
            <div className="w-[1638px] shrink-0">
              <SummaryCard />
              <div className="ml-[48px] mt-[17px] h-[889px] w-[1581px] bg-white"><FloorPlan /></div>
            </div>
            <div className="flex flex-1 flex-col">
              <Slicers />
              <div className="mt-[2px] flex h-6 justify-end gap-1">
                <div className="flex h-[23px] w-6 items-center justify-center bg-white">
                  <svg viewBox="0 0 16 15" className="h-[15px] w-4" fill="none" stroke="#605e5c" strokeWidth="1.200"><path d="M.6.8h14.800v1.500L9.800 8v6.300H6.500V8L.6 2.300Z" /></svg>
                </div>
                <div className="flex h-[23px] w-[17px] items-center justify-end overflow-hidden bg-white">
                  <svg viewBox="0 0 12 14" className="h-[14px] w-3" fill="none" stroke="#605e5c" strokeWidth="1.200"><path d="M6 1H1v12h11M1 8.500h6V13M8 1h4M7 7l5-5" /></svg>
                </div>
              </div>
            </div>
          </div>
        </div>
        <div className="w-[13px] bg-white pl-[3px]"><div className="h-[1062px] w-[8px] rounded-full bg-[#c8c8c8]" /></div>
      </div>
      <div className="h-3 bg-white pt-[2px]"><div className="h-[8px] w-[2369px] rounded-full bg-[#c8c8c8]" /></div>
    </div>
  );
}

function LeftRail() {
  return (
    <div className="flex w-10 shrink-0 bg-[#f3f2f1]">
      <div className="h-10 w-[3px] bg-[#117865]" />
      <div className="flex flex-col items-center pl-[9px] pt-[12px]">
        <svg viewBox="0 0 16 15" className="h-[15px] w-4" fill="none" stroke="#111" strokeWidth="1.200"><path d="M1 0v14h14M3.500 3.500h2.500V12H3.500ZM7.500 6.500H10V12H7.500ZM11.500 2H14v10h-2.500Z" /></svg>
        <svg viewBox="0 0 17 16" className="mt-[25px] h-4 w-[17px]" fill="none" stroke="#605e5c" strokeWidth="1.200"><path d="M.6.8h15.800v14.400H.6ZM.6 4h15.800M.6 8h15.800M.6 11.600h15.800M6 4v11M11 4v11" /></svg>
        <svg viewBox="0 0 18 18" className="mt-[24px] h-[18px] w-[18px]" fill="none" stroke="#605e5c" strokeWidth="1.200"><path d="M.6 5.500h6.500v7.500H.6ZM.6 8.500h6.500M10 .8h7.200v6.500H10ZM10 3.500h7.200M10 10.500h7.200V17H10ZM10 13.500h7.200M4 5.500V3h6M4 13v2h6" /></svg>
      </div>
    </div>
  );
}

const pane = "flex shrink-0 flex-col items-center pr-[3px] pt-[12px] text-[#252423] font-medium ";

function Panes() {
  return (
    <div className="flex h-[1257px] flex-1">
      <div className="h-[1222px] w-8 border-l border-[#b3b0ad] bg-white">
        <div className={pane}>
          <Collapse />
          <svg viewBox="0 0 12 12" className="ml-[3px] mt-[14px] h-3 w-3" fill="none" stroke="#3b3a39" strokeWidth="1.200"><path d="M11 1v10L6.500 7.500H1v-3h5.500Z" /></svg>
          <span className="mt-[10px] whitespace-nowrap text-[14px] leading-[18px] [writing-mode:vertical-rl]">Filters</span>
        </div>
      </div>
      <div className={pane + "w-9 border-l border-[#e1dfdd] bg-[#f3f2f1]"}>
        <Collapse />
        <span className="mt-[14px] whitespace-nowrap text-[14.800px] leading-[18px] [writing-mode:vertical-rl]">Visualizations</span>
      </div>
      <div className={pane + "flex-1 border-l border-[#e1dfdd] bg-[#f3f2f1]"}>
        <Collapse />
        <span className="mt-[14px] whitespace-nowrap text-[14.500px] leading-[18px] [writing-mode:vertical-rl]">Data</span>
      </div>
    </div>
  );
}

function PageTabs() {
  return (
    <div className="flex h-[35px] w-[2418px] bg-[#f3f2f1]">
      <div className="ml-[10px] flex w-6 flex-col items-center pt-[7px]">
        <svg viewBox="0 0 20 14" className="h-[14px] w-5" fill="none" stroke="#252423" strokeWidth="1.400"><path d="M1 .8h18v10.400H1ZM10 11v2.500M6.500 13.300h7" /></svg>
        <div className="mt-[7px] h-[3px] w-6 rounded-sm bg-[#117865]" />
      </div>
      <svg viewBox="0 0 13 20" className="ml-[26px] mt-[5px] h-5 w-[13px]" fill="none" stroke="#484644" strokeWidth="1.500"><rect x=".8" y=".8" width="11.400" height="18.400" rx="1.500" /><path d="M5.500 16.500h2" /></svg>
      <svg viewBox="0 0 5 8" className="ml-[20px] mt-[14px] h-2 w-[5px]" fill="#c8c6c4"><path d="M5 0v8L0 4Z" /></svg>
      <svg viewBox="0 0 5 8" className="ml-[17px] mt-[14px] h-2 w-[5px]" fill="#c8c6c4"><path d="M0 0v8l5-4Z" /></svg>
      <div className="ml-[7px] flex w-[142px] items-center justify-center whitespace-nowrap border-b-4 border-l border-[#117865] border-l-[#a19f9d] bg-white pr-[2px] pt-1 text-[11.500px] text-[#252423]">Behavior Mapping</div>
      <div className="flex w-[152px] items-center justify-center whitespace-nowrap border-x border-[#c8c6c4] text-[11.250px] text-[#252423]">Quantitative Analysis</div>
      <div className="mt-[2px] flex h-8 w-[39px] items-center justify-center bg-[#117865]">
        <svg viewBox="0 0 12 12" className="h-[11px] w-[11px]" stroke="#fff" strokeWidth="2.800"><path d="M6 0v12M0 6h12" /></svg>
      </div>
    </div>
  );
}

function StatusBar() {
  return (
    <div className="flex h-[19px] items-center overflow-hidden border-t border-[#e1dfdd] bg-[#f3f2f1] pt-[5px] text-[11.300px] text-[#484644]">
      <span className="ml-[5px] whitespace-nowrap">Page 1 of 2</span>
      <div className="ml-auto flex items-center">
        <div className="h-[2px] w-[4px] bg-[#605e5c]" />
        <div className="ml-[5px] flex h-[11px] w-[100px] items-center">
          <div className="h-px w-[50px] bg-[#605e5c]" />
          <div className="h-[5px] w-px bg-[#605e5c]" />
          <div className="h-px w-[13px] bg-[#605e5c]" />
          <div className="h-[11px] w-[4px] bg-[#605e5c]" />
          <div className="h-px w-[32px] bg-[#605e5c]" />
        </div>
        <svg viewBox="0 0 8 8" className="ml-[6px] h-2 w-2" stroke="#484644" strokeWidth="1.200"><path d="M4 0v8M0 4h8" /></svg>
        <span className="ml-[14px] w-[41px] text-[11.800px]">190%</span>
        <svg viewBox="0 0 16 12" className="h-3 w-4" fill="none" stroke="#484644" strokeWidth="1.200"><path d="M.6.6h14.800v10.800H.6ZM3 5V3h2.500M10.500 3H13v2M13 7v2h-2.500M5.500 9H3V7" /></svg>
        <span className="ml-[14px] mr-[5px] whitespace-nowrap">Update available (click to download)</span>
      </div>
    </div>
  );
}

export default function App() {
  return (
    <div className="flex h-[1385px] w-[2559px] flex-col overflow-hidden bg-[#f3f2f1] font-['Noto_Sans',sans-serif]">
      <TitleBar />
      <MenuBar />
      <Toolbar />
      <div className="flex h-[1257px]">
        <LeftRail />
        <div className="w-[2418px] shrink-0">
          <Canvas />
          <PageTabs />
        </div>
        <Panes />
      </div>
      <StatusBar />
    </div>
  );
}
